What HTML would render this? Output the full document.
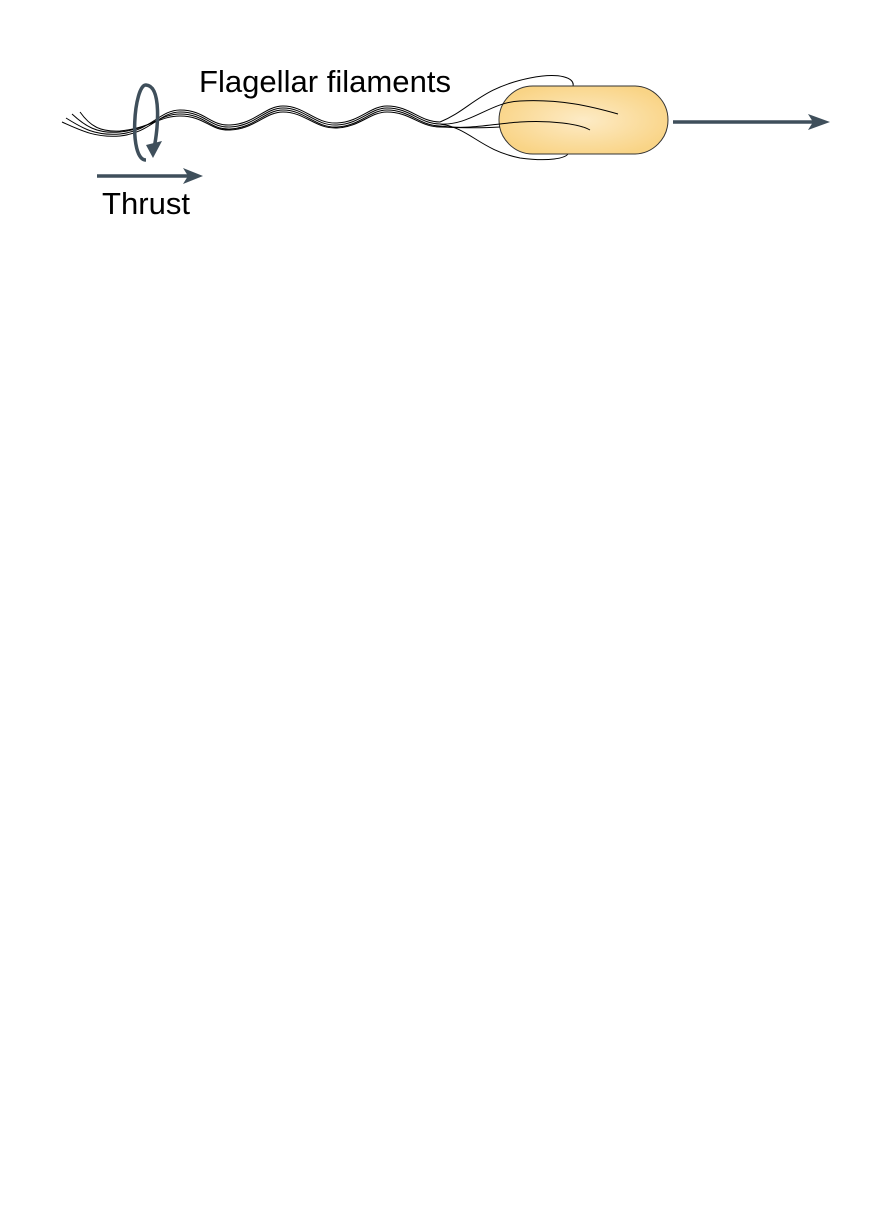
<html><body style="margin:0;background:#fff">
<svg width="885" height="1207" xmlns="http://www.w3.org/2000/svg" style="display:block">
<defs>
<radialGradient id="g" cx="0.5" cy="0.5" r="0.55">
<stop offset="0" stop-color="#fdebc6"/><stop offset="1" stop-color="#f9d486"/>
</radialGradient>
</defs>
<g fill="none" stroke="#000" stroke-width="1">
<path d="M440,122 C470,110 480,88 530,78 C560,72 575,78 573,86"/>
<path d="M440,124 C470,128 480,150 520,158 C550,162 565,158 568,154"/>
</g>
<rect x="499" y="86" width="169" height="68" rx="34" fill="url(#g)" stroke="#333" stroke-width="1"/>
<g fill="none" stroke="#000" stroke-width="1">
<path d="M440,124 C470,126 490,102 520,101 C560,99 590,106 618,114"/>
<path d="M440,126 C470,130 490,124 520,122 C550,120 580,124 590,130"/>
<path d="M440,127 C470,128 480,128 500,127"/>
<path d="M62,122 C80,130 95,138 120,136 C150,133 160,112 180,112 C205,112 210,128 230,127 C255,126 265,108 283,108 C305,108 315,126 337,125 C360,124 370,108 387,108 C410,108 420,124 440,124"/>
<path d="M66,118 C82,128 95,136 120,134 C150,131 160,110 180,110 C205,110 210,126 230,125 C255,124 265,106 283,106 C305,106 315,124 337,123 C360,122 370,106 387,106 C410,106 420,122 440,122"/>
<path d="M72,114 C85,126 97,134 120,132 C150,129 160,114 180,114 C205,114 210,130 230,129 C255,128 265,110 283,110 C305,110 315,128 337,127 C360,126 370,110 387,110 C410,110 420,126 440,126"/>
<path d="M80,112 C90,126 100,132 120,131 C150,128 160,116 180,116 C205,116 210,131 230,130 C255,129 265,112 283,112 C305,112 315,129 337,128 C360,127 370,112 387,112 C410,112 420,127 440,127"/>
</g>
<g stroke="#3f4f5b" stroke-width="3.5" fill="none">
<path d="M146,160 C128,160 134,84 146,85 C162,86 158,130 154,148"/>
<line x1="97" y1="176" x2="190" y2="176"/>
<line x1="673" y1="122" x2="815" y2="122"/>
</g>
<g fill="#3f4f5b">
<polygon points="146,145 162,141 153,158"/>
<polygon points="203,176 183,168 188,176 183,184"/>
<polygon points="830,122 808,114 813,122 808,130"/>
</g>
<g font-family="Liberation Sans, sans-serif" font-size="31" fill="#000">
<text x="199" y="92" textLength="252" lengthAdjust="spacingAndGlyphs">Flagellar filaments</text>
<text x="102" y="214" textLength="88" lengthAdjust="spacingAndGlyphs">Thrust</text>
</g>
</svg>
</body></html>
